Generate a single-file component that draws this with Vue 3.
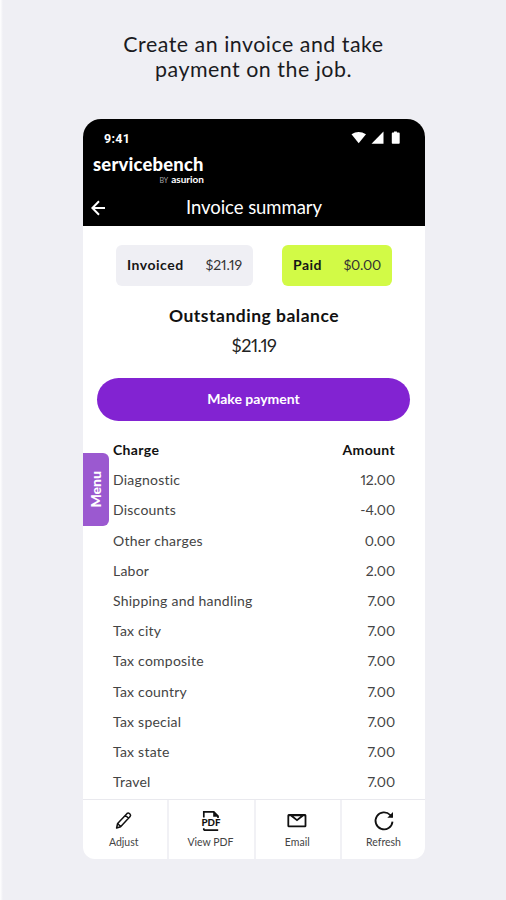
<script setup>
const charges = [
  ['Diagnostic', '12.00'],
  ['Discounts', '-4.00'],
  ['Other charges', '0.00'],
  ['Labor', '2.00'],
  ['Shipping and handling', '7.00'],
  ['Tax city', '7.00'],
  ['Tax composite', '7.00'],
  ['Tax country', '7.00'],
  ['Tax special', '7.00'],
  ['Tax state', '7.00'],
  ['Travel', '7.00'],
]
</script>

<template>
  <main class="page">
    <h1 class="headline">Create an invoice and take<br />payment on the job.</h1>
    <section class="phone">
      <header class="top">
        <div class="status">
          <span class="time">9:41</span>
          <svg class="signals" width="50" height="14" viewBox="0 0 50 14" fill="#fff">
            <path d="M0.5 3.2Q7.5-1.2 15 3.2L7.7 12.3Z" />
            <path d="M32.5 0.5V12.7H20.5Z" />
            <path d="M41.6 1.6h1.4V0.4h2.9v1.2h2q.8 0 .8.8v9.6q0 .8-.8.8h-6.3q-.8 0-.8-.8V2.4q0-.8.8-.8Z" />
          </svg>
        </div>
        <div class="brand">
          <div class="brand-name">servicebench</div>
          <div class="brand-by"><span>BY</span><b>asurion</b></div>
        </div>
        <div class="titlebar">
          <svg class="back" width="14" height="16" viewBox="0 0 14 16" fill="none" stroke="#fff" stroke-width="2">
            <path d="M14 8H1.5M8 1.2L1.4 8L8 14.8" />
          </svg>
          <h2>Invoice summary</h2>
        </div>
      </header>

      <div class="body">
        <div class="totals">
          <div class="total"><b>Invoiced</b><span>$21.19</span></div>
          <div class="total paid"><b>Paid</b><span>$0.00</span></div>
        </div>
        <h3>Outstanding balance</h3>
        <div class="balance">$21.19</div>
        <button class="pay">Make payment</button>
        <div class="charges">
          <div class="row head"><b>Charge</b><b>Amount</b></div>
          <div v-for="[name, amount] in charges" :key="name" class="row">
            <span>{{ name }}</span><span class="amount">{{ amount }}</span>
          </div>
        </div>
      </div>

      <nav class="actions">
        <div class="action">
          <svg width="20" height="22" viewBox="0 0 20 22" fill="none" stroke="#111" stroke-width="1.5" stroke-linejoin="round">
            <path d="M2.6 18l1-4.5L13.1 3.4q1.1-1 2.3.1l.7.7q1 1.1 0 2.2L6.6 16.7ZM11.4 5.2l3 3M3.7 13.6l2.8 2.9" />
          </svg>
          <span>Adjust</span>
        </div>
        <div class="action">
          <svg width="22" height="22" viewBox="0 0 22 22" fill="none" stroke="#111" stroke-width="1.7">
            <path d="M3.8 7.5V1.9h10l4.2 4.2V8M3.8 20.2h14.4M3.8 18.3v2" />
            <path d="M13.2 1.2l5.6 5.6h-5.6Z" fill="#111" stroke="none" />
            <text x="11" y="16.4" text-anchor="middle" textLength="19" lengthAdjust="spacingAndGlyphs" class="pdf">PDF</text>
          </svg>
          <span>View PDF</span>
        </div>
        <div class="action">
          <svg width="20" height="22" viewBox="0 0 20 22" fill="none" stroke="#111" stroke-width="1.8">
            <rect x="1.3" y="5" width="17.2" height="11.4" rx=".6" />
            <path d="M1.5 5.4h17M4.4 5.8l5.6 4.4 5.6-4.4" />
          </svg>
          <span>Email</span>
        </div>
        <div class="action">
          <svg width="22" height="22" viewBox="0 0 22 22" fill="none" stroke="#111" stroke-width="1.8">
            <path d="M19.5 11.6A8.5 8.5 0 1 1 17.2 5L19 6.8" />
            <path d="M20 2V7.7H14.3Z" fill="#111" stroke="none" />
          </svg>
          <span>Refresh</span>
        </div>
      </nav>
      <div class="menu"><span>Menu</span></div>
    </section>
  </main>
</template>

<style>
body { margin: 0; background: #efeff4; }
</style>

<style scoped>
* { box-sizing: border-box; }
h1, h2, h3 { margin: 0; font-weight: 400; }
.page {
  width: 506px;
  height: 900px;
  padding-top: 32px;
  overflow: hidden;
  background: linear-gradient(90deg, #fff 0, #efeff4 3px);
  font-family: Lato, sans-serif;
  color: #111;
}
.headline {
  height: 87px;
  padding-left: 1px;
  text-align: center;
  font-size: 21.4px;
  line-height: 25px;
  letter-spacing: .5px;
  color: #1b1b1f;
}
.phone {
  position: relative;
  display: flex;
  flex-direction: column;
  width: 342px;
  height: 740px;
  margin-left: 83px;
  border-radius: 18px 18px 12px 12px;
  overflow: hidden;
  background: #fff;
}
.top { height: 107px; flex: none; background: #000; color: #fff; }
.status {
  display: flex;
  justify-content: space-between;
  align-items: center;
  height: 36px;
  padding: 2px 24px 0 21px;
}
.time { font: 700 12.5px Roboto, sans-serif; letter-spacing: .3px; }
.brand { width: 112px; height: 33px; margin-left: 10px; }
.brand-name { font-size: 18.4px; line-height: 19px; font-weight: 900; letter-spacing: .2px; }
.brand-by { display: flex; justify-content: flex-end; align-items: baseline; gap: 3px; padding-right: 1px; font-size: 10px; line-height: 10px; }
.brand-by span { font-size: 7px; color: #aaa; }
.titlebar { display: grid; grid-template-columns: 1fr auto 1fr; align-items: center; height: 37px; }
.titlebar h2 { font-size: 18.5px; line-height: 36px; letter-spacing: -.05px; }
.back { margin: 2px 0 0 8px; }
.body { flex: 1; padding-top: 19px; }
.totals { display: flex; gap: 29px; padding-left: 33px; }
.total {
  display: flex;
  justify-content: space-between;
  align-items: center;
  width: 137px;
  height: 41px;
  padding: 0 11px 2px;
  border-radius: 6px;
  background: #efeff4;
  font-size: 14px;
  color: #333;
}
.total b { color: #161616; letter-spacing: .5px; }
.total span { font-variant-numeric: proportional-nums; letter-spacing: -.1px; }
.total.paid span { letter-spacing: -.2px; }
.paid { width: 110px; background: #d2fa46; }
h3 { margin-top: 18px; text-align: center; font-size: 17.5px; line-height: 24px; font-weight: 700; letter-spacing: .5px; }
.balance {
  margin-top: 4px;
  text-align: center;
  font-size: 18px;
  line-height: 26px;
  font-variant-numeric: proportional-nums;
  letter-spacing: -.5px;
  color: #222;
}
.pay {
  display: block;
  width: 313px;
  height: 43px;
  margin: 20px 0 0 14px;
  padding: 0 0 2px;
  border: 0;
  border-radius: 22px;
  background: #8223d2;
  color: #fff;
  font: 700 14px Lato, sans-serif;
  letter-spacing: 0;
}
.charges { padding: 14px 30px 0; }
.row {
  display: flex;
  justify-content: space-between;
  height: 30.2px;
  font-size: 14px;
  line-height: 30.4px;
  letter-spacing: .23px;
  color: #444;
}
.head { color: #111; letter-spacing: .35px; }
.amount { font-variant-numeric: proportional-nums; letter-spacing: -.1px; }
.actions {
  display: grid;
  grid-template-columns: 83.5px 87px 86.5px 1fr;
  flex: none;
  height: 60px;
  border-top: 1px solid #e9e9ee;
}
.action { display: flex; flex-direction: column; align-items: center; padding-right: 1px; border-left: 2px solid #f1f1f5; font-size: 10.5px; color: #444; }
.action:first-child { padding-right: 2px; border-left: 0; }
.action:last-child { padding-right: 0; }
.action svg { height: 22px; margin-top: 10px; flex: none; }
.action span { line-height: 20px; }
.pdf { font: 900 9px Lato, sans-serif; fill: #111; stroke: none; }
.menu {
  position: absolute;
  left: 0;
  top: 334px;
  display: flex;
  align-items: center;
  justify-content: center;
  width: 26px;
  height: 73px;
  padding-right: 2px;
  border-radius: 0 6px 6px 0;
  background: #9b59d0;
  color: #fff;
  font-size: 14px;
  font-weight: 900;
}
.menu span { writing-mode: vertical-rl; transform: rotate(180deg); }
</style>
